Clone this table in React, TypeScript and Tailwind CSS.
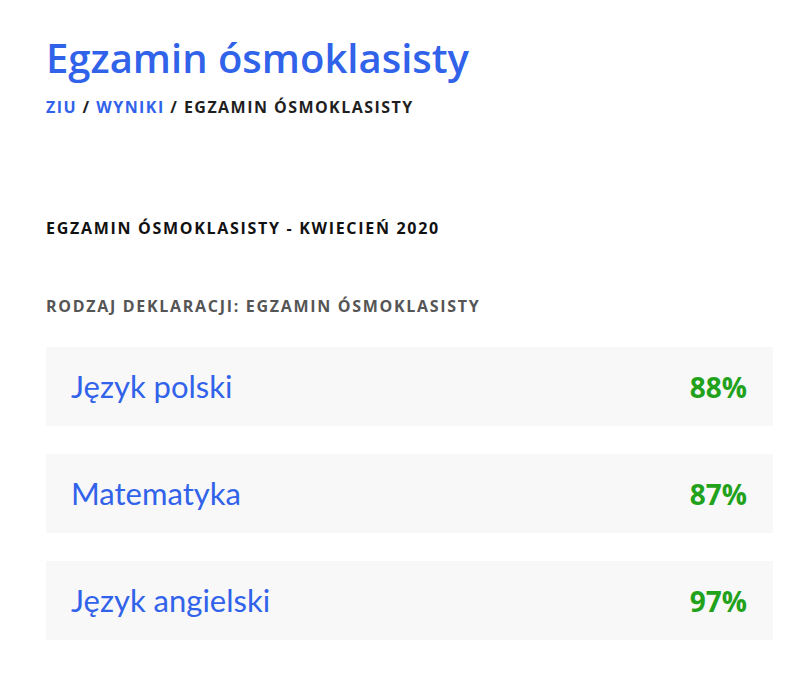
const subjects = [
  { name: 'Język polski', score: 88 },
  { name: 'Matematyka', score: 87 },
  { name: 'Język angielski', score: 97 },
];

export default function App() {
  return (
    <div className="min-h-[700px] bg-white pl-[46px] pr-[35px] pt-[34px] font-['Open_Sans',sans-serif]">
      <h1 className="text-[40px] leading-[48px] font-semibold text-[#3162ea]">Egzamin ósmoklasisty</h1>
      <nav className="mt-[15px] text-[16px] leading-[20px] font-bold uppercase tracking-[1.45px] text-[#1f1f1f]">
        <span className="text-[#3162ea]">ZIU</span> / <span className="text-[#3162ea]">Wyniki</span> / Egzamin ósmoklasisty
      </nav>
      <h2 className="mt-[101px] text-[16px] leading-[20px] font-bold uppercase tracking-[1.7px] text-[#111]">
        Egzamin ósmoklasisty - kwiecień 2020
      </h2>
      <h3 className="mt-[58px] text-[16px] leading-[20px] font-bold uppercase tracking-[1.7px] text-[#555]">
        Rodzaj deklaracji: Egzamin ósmoklasisty
      </h3>
      <div className="mt-[31px] flex flex-col gap-[28px]">
        {subjects.map((s) => (
          <div key={s.name} className="flex h-[79px] items-center justify-between bg-[#f8f8f8] pl-[25px] pr-[26px]">
            <span className="font-['Lato',sans-serif] text-[31px] text-[#3162ea]">{s.name}</span>
            <span className="text-[28px] font-bold text-[#22a11b]">{s.score}%</span>
          </div>
        ))}
      </div>
    </div>
  );
}
